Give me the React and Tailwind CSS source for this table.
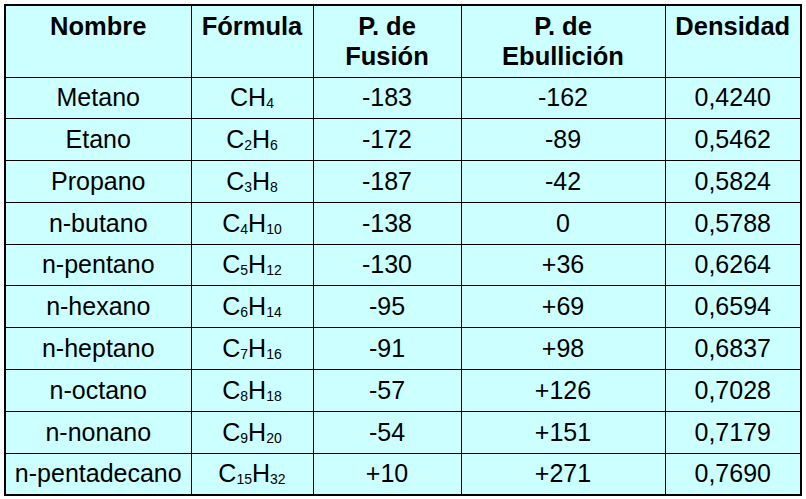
import React from "react";

const rows = [
  ["Metano", [["C", ""], ["H", "4"]], "-183", "-162", "0,4240"],
  ["Etano", [["C", "2"], ["H", "6"]], "-172", "-89", "0,5462"],
  ["Propano", [["C", "3"], ["H", "8"]], "-187", "-42", "0,5824"],
  ["n-butano", [["C", "4"], ["H", "10"]], "-138", "0", "0,5788"],
  ["n-pentano", [["C", "5"], ["H", "12"]], "-130", "+36", "0,6264"],
  ["n-hexano", [["C", "6"], ["H", "14"]], "-95", "+69", "0,6594"],
  ["n-heptano", [["C", "7"], ["H", "16"]], "-91", "+98", "0,6837"],
  ["n-octano", [["C", "8"], ["H", "18"]], "-57", "+126", "0,7028"],
  ["n-nonano", [["C", "9"], ["H", "20"]], "-54", "+151", "0,7179"],
  ["n-pentadecano", [["C", "15"], ["H", "32"]], "+10", "+271", "0,7690"],
];

const Formula = ({ parts }) => (
  <span>
    {parts.map(([el, n], i) => (
      <React.Fragment key={i}>
        {el}
        {n && <sub className="text-[14px] bottom-[-2px]">{n}</sub>}
      </React.Fragment>
    ))}
  </span>
);

const App = () => {
  const th = "border border-black align-top pt-[5px] leading-[30px] font-bold";
  const td = "border border-black align-middle";

  return (
    <div className="w-[806px] h-[499px] bg-white pt-[4px] pl-[4px] font-['Liberation_Sans',Arial,sans-serif] text-black">
      <table className="table-fixed border-collapse w-[796px] bg-[#ccffff] text-center border-2 border-black">
        <colgroup>
          <col className="w-[186px]" />
          <col className="w-[122px]" />
          <col className="w-[148px]" />
          <col className="w-[204px]" />
          <col className="w-[136px]" />
        </colgroup>
        <thead>
          <tr className="h-[72px] text-[25.5px]">
            <th className={th}>Nombre</th>
            <th className={th}>Fórmula</th>
            <th className={th}>
              P. de
              <br />
              Fusión
            </th>
            <th className={th}>
              P. de
              <br />
              Ebullición
            </th>
            <th className={th}>Densidad</th>
          </tr>
        </thead>
        <tbody>
          {rows.map((r) => (
            <tr key={r[0]} className="h-[41.8px] text-[25px]">
              <td className={td}>{r[0]}</td>
              <td className={td}>
                <Formula parts={r[1]} />
              </td>
              <td className={td}>{r[2]}</td>
              <td className={td}>{r[3]}</td>
              <td className={td}>{r[4]}</td>
            </tr>
          ))}
        </tbody>
      </table>
    </div>
  );
};

export default App;
